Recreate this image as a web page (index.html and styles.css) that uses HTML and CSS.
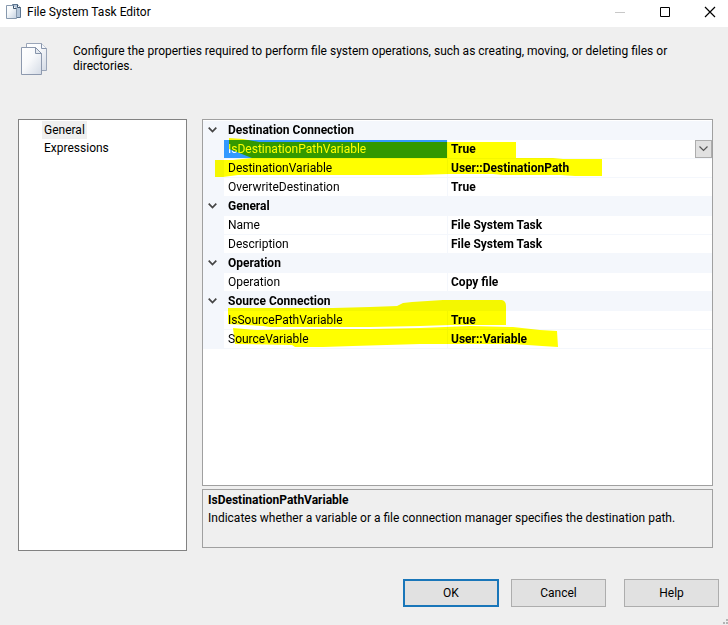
FILE: index.html
```html
<!DOCTYPE html>
<html lang="en">
<head>
<meta charset="utf-8">
<title>File System Task Editor</title>
<link rel="stylesheet" href="styles.css">
</head>
<body>
<div class="window">
  <header class="titlebar">
    <svg class="app-icon" width="16" height="16" viewBox="0 0 16 16" aria-hidden="true">
      <defs>
        <linearGradient id="page" x1="0" y1="0" x2="1" y2="1">
          <stop offset="0" stop-color="#fff"/><stop offset=".4" stop-color="#f4f7fa"/><stop offset="1" stop-color="#c3d0e0"/>
        </linearGradient>
      </defs>
      <path d="M6.500 .5h5l3 3v10h-8z" fill="#b4c6da" stroke="#5d7691"/>
      <path d="M11.500 .5v3h3" fill="#fff" stroke="#3d556f"/>
      <path d="M.5 1.500h7l3 3v10h-10z" fill="url(#page)" stroke="#8799ae"/>
      <path d="M7.500 1.500v3h3" fill="#fff" stroke="#3d556f"/>
    </svg>
    <h1 class="title">File System Task Editor</h1>
    <div class="window-buttons">
      <button class="window-button" aria-label="Minimize" disabled><svg width="12" height="12" viewBox="0 0 12 12"><path d="M1 6.500h10" stroke="#c8c8c8"/></svg></button>
      <button class="window-button" aria-label="Maximize"><svg width="12" height="12" viewBox="0 0 12 12"><path d="M1.500 1.500h9v9h-9z" fill="none" stroke="#000"/></svg></button>
      <button class="window-button" aria-label="Close"><svg width="12" height="12" viewBox="0 0 12 12"><path d="M1 1l10 10M11 1L1 11" stroke="#000" stroke-width="1.200"/></svg></button>
    </div>
  </header>

  <section class="intro">
    <svg class="intro-icon" width="27" height="33" viewBox="0 0 27 33" aria-hidden="true">
      <defs>
        <linearGradient id="sheet" x1="0" y1="0" x2="1" y2="1">
          <stop offset="0" stop-color="#fff"/><stop offset=".45" stop-color="#f8f9fb"/><stop offset="1" stop-color="#d3dae5"/>
        </linearGradient>
      </defs>
      <path d="M5.500 .5h15l5 5v22h-20z" fill="url(#sheet)" stroke="#9aa5b8"/>
      <path d="M20.500 .5v5h5" fill="#f5f7fa" stroke="#8794aa"/>
      <path d="M.5 4.500h14l6 6v21h-20z" fill="url(#sheet)" stroke="#8d99ae"/>
      <path d="M14.500 4.500v6h6z" fill="#e4e9f0" stroke="#8794aa"/>
    </svg>
    <p class="intro-text">Configure the properties required to perform file system operations, such as creating, moving, or deleting files or directories.</p>
  </section>

  <main class="content">
    <nav class="pages" aria-label="Pages">
      <button class="page page-current" aria-current="page">General</button>
      <button class="page">Expressions</button>
    </nav>

    <div class="properties">
      <div class="grid-panel">
        <table class="grid">
          <colgroup><col class="col-gutter"><col class="col-name"><col></colgroup>
          <tbody>
            <tr class="category"><td><button class="expander" aria-label="Collapse Destination Connection"><svg width="9" height="6" viewBox="0 0 9 6"><path d="M.7.7l3.800 3.800L8.300.7" fill="none" stroke="#444" stroke-width="1.700"/></svg></button></td><th colspan="2">Destination Connection</th></tr>
            <tr class="selected"><td></td><th><label for="is-destination">IsDestinationPathVariable</label></th><td>
              <div class="picker">
                <select id="is-destination" class="picker-select"><option>True</option><option>False</option></select>
                <span class="picker-arrow"><svg width="9" height="6" viewBox="0 0 9 6"><path d="M.5.5l4 4 4-4" fill="none" stroke="#555" stroke-width="1.200"/></svg></span>
              </div>
            </td></tr>
            <tr><td></td><th>DestinationVariable</th><td>User::DestinationPath</td></tr>
            <tr><td></td><th>OverwriteDestination</th><td>True</td></tr>
            <tr class="category"><td><button class="expander" aria-label="Collapse General"><svg width="9" height="6" viewBox="0 0 9 6"><path d="M.7.7l3.800 3.800L8.300.7" fill="none" stroke="#444" stroke-width="1.700"/></svg></button></td><th colspan="2">General</th></tr>
            <tr><td></td><th>Name</th><td>File System Task</td></tr>
            <tr><td></td><th>Description</th><td>File System Task</td></tr>
            <tr class="category"><td><button class="expander" aria-label="Collapse Operation"><svg width="9" height="6" viewBox="0 0 9 6"><path d="M.7.7l3.800 3.800L8.300.7" fill="none" stroke="#444" stroke-width="1.700"/></svg></button></td><th colspan="2">Operation</th></tr>
            <tr><td></td><th>Operation</th><td>Copy file</td></tr>
            <tr class="category"><td><button class="expander" aria-label="Collapse Source Connection"><svg width="9" height="6" viewBox="0 0 9 6"><path d="M.7.7l3.800 3.800L8.300.7" fill="none" stroke="#444" stroke-width="1.700"/></svg></button></td><th colspan="2">Source Connection</th></tr>
            <tr><td></td><th>IsSourcePathVariable</th><td>True</td></tr>
            <tr><td></td><th>SourceVariable</th><td>User::Variable</td></tr>
          </tbody>
        </table>
        <!-- Highlighter strokes, multiplied over the rows -->
        <svg class="marker" width="420" height="240" viewBox="0 0 420 240" aria-hidden="true">
          <path d="M26 18L40 19L56 22H313V38H350L360 39H399V56H372L357 55H300L290 54H246L215 55H35L20 57H12V40H30L49 38L26 29Z"/>
          <path d="M25 188H130L167 187L194 186L200 183L209 182L240 180H299Q303 181 303 186V205H247L217 206L167 207H67L60 206L25 204Z"/>
          <path d="M30 208L54 210L110 209H167L217 208L267 206L310 207L337 210L354 211L355 227L339 226L310 224H217L150 226L120 227H92L89 225L32 224Z"/>
        </svg>
      </div>
      <section class="help">
        <h2 class="help-title">IsDestinationPathVariable</h2>
        <p class="help-text">Indicates whether a variable or a file connection manager specifies the destination path.</p>
      </section>
    </div>
  </main>

  <footer class="actions">
    <button class="action action-default">OK</button>
    <button class="action">Cancel</button>
    <button class="action action-help">Help</button>
    <svg class="grip" width="6" height="6" viewBox="0 0 6 6" aria-hidden="true"><path d="M4 0h2v2H4zM4 3h2v2H4zM1 3h2v2H1z" fill="#b4b4b4"/></svg>
  </footer>
</div>
</body>
</html>
```
FILE: styles.css
```css
* { box-sizing: border-box; }

body {
  margin: 0;
  background: #efefef;
  color: #000;
  font: 12px/15px Roboto, "Open Sans", sans-serif;
}

button, select { font: inherit; color: inherit; }
h1, h2, p { margin: 0; font-size: 12px; }

.window {
  position: relative;
  display: flex;
  flex-direction: column;
  min-height: 100vh;
}

.titlebar {
  display: flex;
  align-items: center;
  height: 27px;
  padding: 0 0 4px 6px;
  background: #fff;
}
.app-icon { flex: none; }
.title { margin-left: 5px; padding-top: 2px; font-weight: 400; }
.window-buttons {
  display: flex;
  margin-right: -4px;
  margin-left: auto;
  overflow: hidden;
}
.window-button {
  display: flex;
  align-items: center;
  justify-content: center;
  width: 45px;
  height: 22px;
  padding: 0;
  border: 0;
  background: none;
}

.intro {
  display: flex;
  gap: 25px;
  height: 92px;
  padding: 16px 46px 0 21px;
}
.intro-icon { flex: none; }
.intro-text { flex: 1; padding-top: 1px; }

.content {
  flex: 1;
  display: grid;
  grid-template-columns: 169px 1fr;
  gap: 15px;
  padding: 0 15px 0 18px;
}

.pages {
  display: flex;
  flex-direction: column;
  align-items: flex-start;
  padding: 1px 0 0 23px;
  border: 1px solid #828282;
  background: #fff;
}
.page {
  height: 18px;
  padding: 0 2px;
  border: 0;
  background: none;
}
.page-current { background: #efefef; }

.properties {
  display: flex;
  flex-direction: column;
  gap: 3px;
  min-width: 0;
  padding-bottom: 3px;
}
.grid-panel {
  position: relative;
  isolation: isolate;
  flex: 1;
  padding-top: 1px;
  border: 1px solid #a0a0a0;
  background: #fff;
}
.grid {
  width: 100%;
  border-collapse: separate;
  border-spacing: 0;
  table-layout: fixed;
}
.col-gutter { width: 21px; }
.col-name { width: 224px; }
.grid tr { height: 19px; }
.grid td, .grid th {
  height: 19px;
  padding: 0 4px;
  border-bottom: 1px solid #f4f7fc;
  line-height: 18px;
  text-align: left;
  white-space: nowrap;
}
.grid th { font-weight: 400; border-right: 1px solid #f4f7fc; }
.grid td { padding-left: 3px; font-weight: 700; }
.grid td:first-child { padding: 0 4px; background: #f4f7fc; }
.grid .category th { background: #f4f7fc; font-weight: 700; }
.selected th { background: #39f; color: #fff; }
.grid .selected td:last-child { padding-right: 0; }

.expander {
  display: flex;
  align-items: center;
  justify-content: center;
  width: 11px;
  height: 18px;
  padding: 0;
  border: 0;
  background: none;
}

.picker { display: flex; position: relative; height: 18px; }
.picker-select {
  flex: 1;
  height: 18px;
  padding: 0;
  border: 0;
  background: none;
  font-weight: 700;
  line-height: 18px;
  appearance: none;
}
.picker-arrow {
  position: absolute;
  top: 0;
  right: 0;
  display: flex;
  align-items: center;
  justify-content: center;
  width: 17px;
  height: 18px;
  border: 1px solid #adadad;
  background: #e1e1e1;
  pointer-events: none;
}

.marker {
  position: absolute;
  top: 0;
  left: 0;
  fill: #ff0;
  mix-blend-mode: multiply;
  pointer-events: none;
}

.help {
  min-height: 59px;
  padding: 1px 5px;
  border: 1px solid #a0a0a0;
}
.help-title { font-weight: 700; line-height: 18px; }
.help-text { line-height: 18px; }

.actions {
  display: flex;
  justify-content: flex-end;
  gap: 12px;
  padding: 28px 9px 18px;
}
.action {
  width: 95px;
  height: 28px;
  padding: 0;
  border: 1px solid #adadad;
  background: #e1e1e1;
}
.action-default { width: 96px; border: 2px solid #1976b9; }
.action-help { margin-left: 6px; }
.grip { position: absolute; right: 0; bottom: 0; }
```
